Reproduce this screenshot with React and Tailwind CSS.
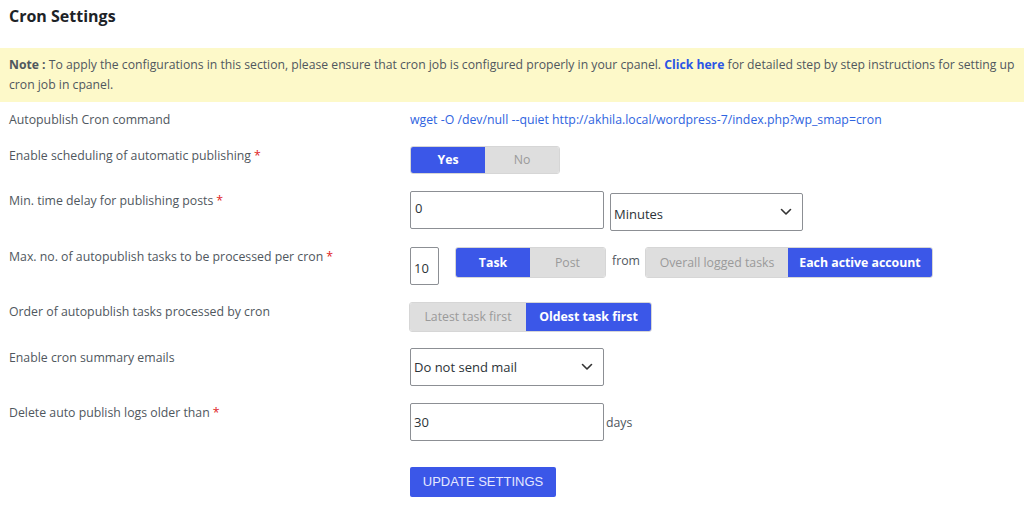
import React from "react";

const Star = () => <span className="text-[#e02424] ml-[3px]">*</span>;

const Chevron = () => (
  <svg width="12" height="8" viewBox="0 0 12 8" className="shrink-0">
    <path d="M1.5 1.5 L6 6 L10.5 1.5" fill="none" stroke="#333" strokeWidth="1.6" strokeLinecap="round" strokeLinejoin="round" />
  </svg>
);

function Seg({ items, active, widths, h }) {
  return (
    <div className={`flex rounded-[3px] overflow-hidden border border-[#d6d6d6] ${h}`}>
      {items.map((t, i) => (
        <div
          key={t}
          style={{ width: widths[i] }}
          className={
            i === active
              ? "flex items-center justify-center bg-[#3b57e8] text-white font-bold"
              : "flex items-center justify-center bg-[#dedede] text-[#9a9a9a]"
          }
        >
          {t}
        </div>
      ))}
    </div>
  );
}

export default function App() {
  return (
    <div className="w-[1024px] h-[510px] bg-white text-[12.3px] text-[#50575e] overflow-hidden" style={{ fontFamily: '"Open Sans", "Noto Sans", sans-serif' }}>
      <div className="pl-[9px] pt-[5px] h-[48px] text-[16px] font-bold text-[#1d2327] leading-[22px]">Cron Settings</div>
      <p className="bg-[#fdf9c9] pl-[9px] pr-[2px] py-[7px] leading-[20px] text-[12.2px] text-[#50575e]">
        <b>Note :</b> To apply the configurations in this section, please ensure that cron job is configured properly in your cpanel. <b className="text-[#2a55e5]">Click here</b> for detailed step by step instructions for setting up cron job in cpanel.
      </p>

      <div className="flex flex-col pl-[9px] leading-[18px]">
        <div className="flex mt-[9px]">
          <div className="w-[401px]">Autopublish Cron command</div>
          <div className="text-[#2f64e0]">wget -O /dev/null --quiet http://akhila.local/wordpress-7/index.php?wp_smap=cron</div>
        </div>

        <div className="flex items-start mt-[17px]">
          <div className="w-[401px] pt-[1px]">Enable scheduling of automatic publishing<Star /></div>
          <Seg items={["Yes", "No"]} active={0} widths={[74, 74]} h="h-[28px]" />
        </div>

        <div className="flex items-start mt-[17px]">
          <div className="w-[401px] pt-[1px]">Min. time delay for publishing posts<Star /></div>
          <div className="w-[194px] h-[38px] border border-[#8c8f94] rounded-[2px] flex items-center pl-[4px] text-[13px] text-[#2c3338] pb-[4px]">0</div>
          <div className="ml-[6px] mt-[2px] w-[193px] h-[38px] border border-[#8c8f94] rounded-[2px] flex items-center justify-between pl-[3px] pr-[10px] text-[13px] text-[#2c3338]">
            <span className="pt-[4px]">Minutes</span>
            <Chevron />
          </div>
        </div>

        <div className="flex items-start mt-[16px]">
          <div className="w-[401px] pt-[1px]">Max. no. of autopublish tasks to be processed per cron<Star /></div>
          <div className="w-[29px] h-[38px] border border-[#8c8f94] rounded-[2px] flex items-center pl-[3px] text-[13px] text-[#2c3338] pt-[4px]">10</div>
          <div className="ml-[16px]">
            <Seg items={["Task", "Post"]} active={0} widths={[74, 75]} h="h-[31px]" />
          </div>
          <div className="ml-[6px] mt-[5px] w-[33px]">from</div>
          <Seg items={["Overall logged tasks", "Each active account"]} active={1} widths={[142, 144]} h="h-[31px]" />
        </div>

        <div className="flex items-start mt-[17px]">
          <div className="w-[400px] pt-[1px]">Order of autopublish tasks processed by cron</div>
          <Seg items={["Latest task first", "Oldest task first"]} active={1} widths={[116, 125]} h="h-[30px]" />
        </div>

        <div className="flex items-start mt-[16px]">
          <div className="w-[401px] pt-[1px]">Enable cron summary emails</div>
          <div className="w-[194px] h-[38px] border border-[#8c8f94] rounded-[2px] flex items-center justify-between pl-[3px] pr-[10px] text-[13px] text-[#2c3338]">
            <span>Do not send mail</span>
            <Chevron />
          </div>
        </div>

        <div className="flex items-start mt-[17px]">
          <div className="w-[401px] pt-[1px]">Delete auto publish logs older than<Star /></div>
          <div className="w-[194px] h-[38px] border border-[#8c8f94] rounded-[2px] flex items-center pl-[3px] text-[13px] text-[#2c3338]">30</div>
          <div className="ml-[2px] mt-[11px]">days</div>
        </div>

        <div className="flex mt-[26px]">
          <div className="w-[401px]"></div>
          <div className="w-[146px] h-[30px] bg-[#3b57e8] rounded-[2px] flex items-center justify-center text-[13px] text-[#e4e8ff]" style={{ fontFamily: '"Liberation Sans", Arial, sans-serif' }}>UPDATE SETTINGS</div>
        </div>
      </div>
    </div>
  );
}
